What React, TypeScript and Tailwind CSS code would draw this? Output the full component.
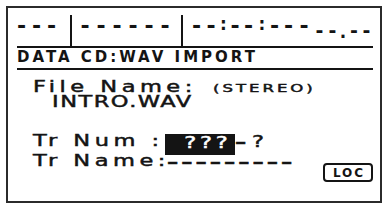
import React from 'react';

const font = "font-['DejaVu_Sans',sans-serif] font-bold text-[#141414]";
// the LCD font is wide and heavy: stretch the glyphs horizontally, thicken the strokes a little
const wide = 'origin-left scale-x-150 font-normal [-webkit-text-stroke-width:0.45px]';

// top counter row, third group: [char, cell width class, style class]
const counter3: [string, string, string][] = [
  ['-', 'w-[15px]', 'text-[22px] leading-[22px]'],
  ['-', 'w-[14px]', 'text-[22px] leading-[22px]'],
  [':', 'w-[11px]', 'text-[17px] leading-[22px] mt-[-2px]'],
  ['-', 'w-[12px]', 'text-[22px] leading-[22px]'],
  ['-', 'w-[15px]', 'text-[22px] leading-[22px]'],
  [':', 'w-[12px]', 'text-[17px] leading-[22px] mt-[-2px]'],
  ['-', 'w-[13px]', 'text-[22px] leading-[22px]'],
  ['-', 'w-[15px]', 'text-[22px] leading-[22px]'],
  ['-', 'w-[16px]', 'text-[22px] leading-[22px]'],
  ['-', 'w-[15px]', 'text-[19px] leading-[22px] mt-[4px]'],
  ['-', 'w-[11px]', 'text-[19px] leading-[22px] mt-[4px]'],
  ['.', 'w-[10px]', 'text-[17px] leading-[22px] mt-[6px]'],
  ['-', 'w-[12px]', 'text-[19px] leading-[22px] mt-[4px]'],
  ['-', 'w-[13px]', 'text-[19px] leading-[22px] mt-[4px]'],
];

function Dash({ w }: { w: string }) {
  return <span className={`${w} text-center text-[22px] leading-[22px]`}>-</span>;
}

function Bar() {
  return <div className="w-[2px] self-stretch bg-[#141414]" />;
}

function Rule() {
  return <div className="h-[2px] bg-[#141414] ml-[9px] mr-[7px]" />;
}

export default function App() {
  return (
    <div className={`w-[384px] h-[206px] bg-white pt-[6px] pl-[6px] ${font}`}>
      <div className="w-[376px] h-[197px] border-2 border-[#2b2b2b] flex flex-col">
        {/* counter */}
        <div className="flex items-start h-[31px] mt-[7px]">
          <div className="w-[62px] pl-[6px] flex">
            <Dash w="w-[15px]" />
            <Dash w="w-[15px]" />
            <Dash w="w-[15px]" />
          </div>
          <Bar />
          <div className="w-[109px] pl-[5px] flex">
            {[0, 1, 2, 3, 4, 5].map((i) => (
              <Dash key={i} w="w-[16px]" />
            ))}
          </div>
          <Bar />
          <div className="pl-[6px] flex items-start">
            {counter3.map(([c, w, s], i) => (
              <span key={i} className={`${w} ${s} text-center`}>
                {c}
              </span>
            ))}
          </div>
        </div>
        <Rule />
        <div className="h-[20px] pl-[9px] pt-[2px] text-[15px] leading-[15px] tracking-[3px] whitespace-nowrap">
          DATA CD:WAV IMPORT
        </div>
        <Rule />

        {/* file */}
        <div className="mt-[10px] h-[15px] pl-[25px] flex items-baseline text-[15px] leading-[15px] whitespace-nowrap">
          <span className={`w-[180px] tracking-[3px] ${wide}`}>File Name:</span>
          <span className={`text-[11px] tracking-[2px] ${wide}`}>(STEREO)</span>
        </div>
        <div className="h-[15px] pl-[44px] flex text-[15px] leading-[15px] whitespace-nowrap">
          <span className={`tracking-[1px] ${wide}`}>INTRO.WAV</span>
        </div>

        {/* track */}
        <div className="mt-[24px] h-[20px] pl-[25px] flex items-start text-[15px] leading-[15px] whitespace-nowrap">
          <span className={`w-[132px] tracking-[3px] ${wide}`}>Tr Num :</span>
          <span className="w-[70px] h-[21px] bg-[#141414] text-white pr-[4px] pt-[2px] flex items-start justify-end">
            <span className="origin-right scale-x-150 font-normal tracking-[2.5px] [-webkit-text-stroke-width:0.45px]">
              ???
            </span>
          </span>
          <span className="w-[17px] origin-left scale-x-150 mt-[1px] [-webkit-text-stroke-width:0.4px]">–</span>
          <span className={`${wide} mt-[1px]`}>?</span>
        </div>
        <div className="h-[30px] pl-[25px] pr-[7px] flex items-start text-[15px] leading-[15px] whitespace-nowrap">
          <span className={`w-[134px] tracking-[3px] ${wide}`}>Tr Name:</span>
          <span className="origin-left scale-x-150 tracking-[2px] mt-[1px] [-webkit-text-stroke-width:0.4px]">
            –––––––––
          </span>
          <span className="ml-auto mt-[9px] w-[50px] h-[19px] border-2 border-[#141414] rounded-[4px] flex items-center justify-center pl-[2px] text-[12px] leading-[12px] tracking-[2px]">
            LOC
          </span>
        </div>
      </div>
    </div>
  );
}
